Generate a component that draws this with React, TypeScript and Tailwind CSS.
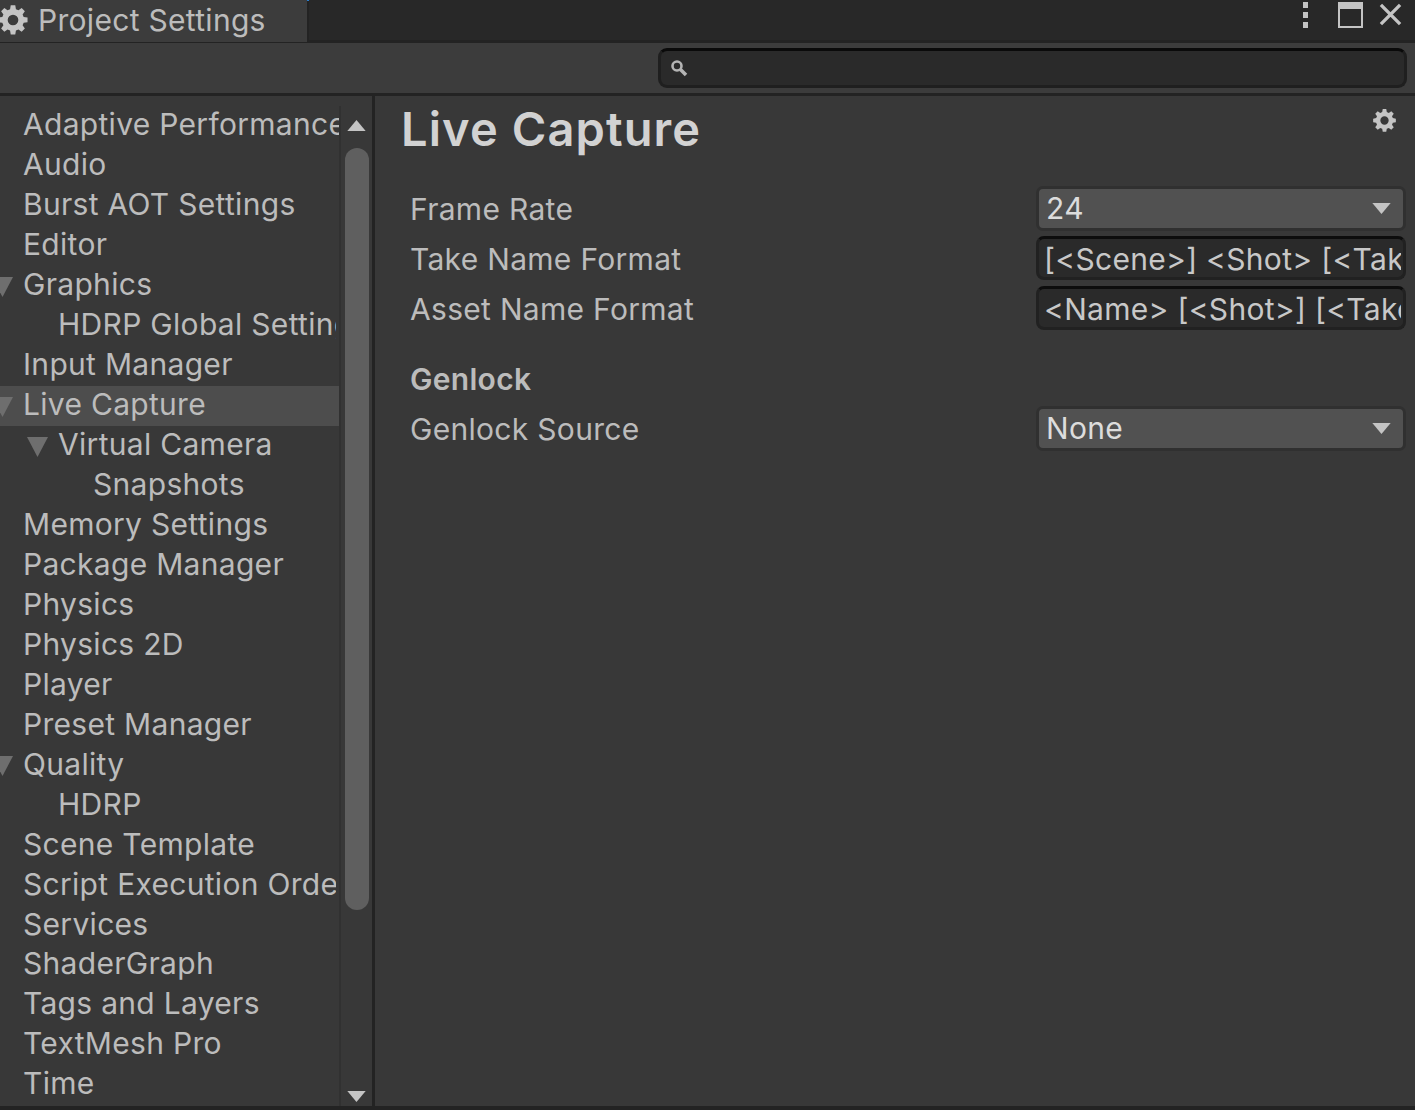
const gearPath =
  'M10.3 1h3.4l.5 2.9 1.9.8 2.4-1.7 2.4 2.4-1.7 2.4.8 1.9 2.9.5v3.4l-2.9.5-.8 1.9 1.7 2.4-2.4 2.4-2.4-1.7-1.9.8-.5 2.9h-3.4l-.5-2.9-1.9-.8-2.4 1.7-2.4-2.4 1.7-2.4-.8-1.9-2.9-.5v-3.4l2.9-.5.8-1.9-1.7-2.4 2.4-2.4 2.4 1.7 1.9-.8zM12 8a4 4 0 1 0 0 8 4 4 0 0 0 0-8z'

function Gear({ className }: { className: string }) {
  return (
    <svg viewBox="0 0 24 24" className={className} fill="currentColor" fillRule="evenodd">
      <path d={gearPath} />
    </svg>
  )
}

function Arrow({ className, up }: { className: string; up?: boolean }) {
  return (
    <svg viewBox="0 0 20 12" className={className} fill="currentColor">
      <path d={up ? 'M10 0 20 12H0z' : 'M0 0h20L10 12z'} />
    </svg>
  )
}

const items: { name: string; depth: number; open?: boolean; selected?: boolean; clipped?: boolean }[] = [
  { name: 'Adaptive Performance', depth: 0 },
  { name: 'Audio', depth: 0 },
  { name: 'Burst AOT Settings', depth: 0 },
  { name: 'Editor', depth: 0 },
  { name: 'Graphics', depth: 0, open: true },
  { name: 'HDRP Global Settings', depth: 1, clipped: true },
  { name: 'Input Manager', depth: 0 },
  { name: 'Live Capture', depth: 0, open: true, selected: true },
  { name: 'Virtual Camera', depth: 1, open: true },
  { name: 'Snapshots', depth: 2 },
  { name: 'Memory Settings', depth: 0 },
  { name: 'Package Manager', depth: 0 },
  { name: 'Physics', depth: 0 },
  { name: 'Physics 2D', depth: 0 },
  { name: 'Player', depth: 0 },
  { name: 'Preset Manager', depth: 0 },
  { name: 'Quality', depth: 0, open: true },
  { name: 'HDRP', depth: 1 },
  { name: 'Scene Template', depth: 0 },
  { name: 'Script Execution Order', depth: 0, clipped: true },
  { name: 'Services', depth: 0 },
  { name: 'ShaderGraph', depth: 0 },
  { name: 'Tags and Layers', depth: 0 },
  { name: 'TextMesh Pro', depth: 0 },
  { name: 'Time', depth: 0 },
]

const depthPad = ['pl-[23px]', 'pl-[58px]', 'pl-[93px]']
const arrowPos = ['left-[-8px]', 'left-[27px]', 'left-[62px]']

function TreeRow({ name, depth, open, selected, clipped }: (typeof items)[number]) {
  return (
    <div
      className={`relative flex h-[39.96px] shrink-0 items-center overflow-hidden whitespace-nowrap pb-[3px] ${depthPad[depth]} ${selected ? 'bg-[#4d4d4d]' : ''} ${clipped ? 'pr-[3px]' : ''}`}
    >
      {open && (
        <svg viewBox="0 0 21 20" className={`absolute top-[11px] h-[20px] w-[21px] text-[#6e6e6e] ${arrowPos[depth]}`} fill="currentColor">
          <path d="M0 0h21L10.5 20z" />
        </svg>
      )}
      <span className={clipped ? 'min-w-0 overflow-hidden' : ''}>{name}</span>
    </div>
  )
}

function Field({ label, children }: { label: string; children: React.ReactNode }) {
  return (
    <div className="flex h-[50px] items-center pl-[35px] pr-[9px]">
      <div className="w-[626px] shrink-0">{label}</div>
      <div className="min-w-0 flex-1">{children}</div>
    </div>
  )
}

function Dropdown({ value }: { value: string }) {
  return (
    <div className="mb-[1px] flex h-[45px] items-center justify-between rounded-[7px] border-[3px] border-[#303030] bg-[#515151] pb-[1px] pl-[7px] pr-[12px] text-[#dcdcdc]">
      <span>{value}</span>
      <Arrow className="h-[11px] w-[19px] text-[#c4c4c4]" />
    </div>
  )
}

function TextInput({ value }: { value: string }) {
  return (
    <div className="mb-[2px] flex h-[44px] items-center overflow-hidden whitespace-nowrap rounded-[8px] border-[3px] border-[#212121] border-t-[#0d0d0d] bg-[#2a2a2a] pl-[5px] pr-[2px] pt-[1px] text-[#c8c8c8]">
      <span className="block w-full overflow-hidden">{value}</span>
    </div>
  )
}

export default function App() {
  return (
    <div className="flex h-[1110px] w-[1415px] flex-col overflow-hidden bg-[#383838] font-['Inter',sans-serif] text-[30px] leading-[36px] tracking-[0.3px] text-[#bcbcbc]">
      {/* title bar */}
      <div className="flex h-[43px] shrink-0 border-b-[3px] border-[#232323] bg-[#282828]">
        <div className="relative flex h-[42px] w-[309px] items-center border-r-[2px] border-[#232323] bg-[#3c3c3c] pb-[2px]">
          <div className="absolute right-[-2px] top-0 h-[1px] w-[2px] bg-[#2a7fd0]" />
          <Gear className="ml-[-3px] h-[32px] w-[32px] shrink-0 text-[#c4c4c4]" />
          <span className="ml-[9px]">Project Settings</span>
        </div>
        <div className="flex-1" />
        <div className="flex items-start text-[#c4c4c4]">
          <svg viewBox="0 0 10 28" className="mt-[2px] h-[28px] w-[10px]" fill="currentColor">
            <rect x="1" y="0" width="5" height="6" />
            <rect x="1" y="10" width="5" height="6" />
            <rect x="1" y="20" width="5" height="6" />
          </svg>
          <svg viewBox="0 0 25 26" className="ml-[26px] mt-[2px] h-[26px] w-[25px]" fill="currentColor" fillRule="evenodd">
            <path d="M0 0h25v26H0zM2 7v17h21V7z" />
          </svg>
          <svg viewBox="0 0 24 24" className="ml-[16px] mr-[13px] mt-[3px] h-[23px] w-[23px]" stroke="currentColor" strokeWidth="3.5" fill="none">
            <path d="M2 2 22 22M22 2 2 22" />
          </svg>
        </div>
      </div>

      {/* toolbar */}
      <div className="flex h-[53px] shrink-0 items-center justify-end border-b-[3px] border-[#232323] bg-[#3c3c3c] pr-[8px]">
        <div className="flex h-[40px] w-[749px] items-center rounded-[9px] border-[3px] border-[#1f1f1f] border-t-[#0a0a0a] bg-[#2a2a2a] pl-[8px]">
          <svg viewBox="0 0 20 20" className="h-[20px] w-[20px] text-[#b4b4b4]" fill="none" stroke="currentColor">
            <circle cx="8" cy="8" r="4.5" strokeWidth="2.6" />
            <path d="M11.5 11.5 17 17" strokeWidth="3.6" />
          </svg>
        </div>
      </div>

      <div className="flex min-h-0 flex-1 border-b-[4px] border-[#232323]">
        {/* settings tree */}
        <div className="flex w-[375px] shrink-0 border-r-[3px] border-[#232323]">
          <div className="flex w-[339px] shrink-0 flex-col overflow-hidden pt-[10px]">
            {items.map(item => (
              <TreeRow key={item.name} {...item} />
            ))}
          </div>
          <div className="mt-[10px] flex w-[33px] shrink-0 flex-col items-center border-l-[2px] border-[#313131]">
            <Arrow up className="mt-[14px] h-[11px] w-[19px] text-[#c4c4c4]" />
            <div className="mt-[17px] h-[762px] w-[24px] rounded-[12px] bg-[#5f5f5f]" />
            <Arrow className="mb-[4px] mt-auto h-[11px] w-[19px] text-[#c4c4c4]" />
          </div>
        </div>

        {/* settings panel */}
        <div className="relative min-w-0 flex-1">
          <Gear className="absolute right-[18px] top-[12px] h-[25px] w-[25px] text-[#c4c4c4]" />
          <h1 className="ml-[26px] mt-[8px] h-[50px] text-[47px] font-semibold leading-[50px] tracking-[1.1px] text-[#d2d2d2]">
            Live Capture
          </h1>
          <div className="mt-[30px]">
            <Field label="Frame Rate">
              <Dropdown value="24" />
            </Field>
            <Field label="Take Name Format">
              <TextInput value="[<Scene>] <Shot> [<Take>] [<Name>]" />
            </Field>
            <Field label="Asset Name Format">
              <TextInput value="<Name> [<Shot>] [<Take>]" />
            </Field>
          </div>
          <div className="mt-[20px] h-[50px] pl-[35px] font-semibold leading-[50px]">Genlock</div>
          <Field label="Genlock Source">
            <Dropdown value="None" />
          </Field>
        </div>
      </div>
    </div>
  )
}
